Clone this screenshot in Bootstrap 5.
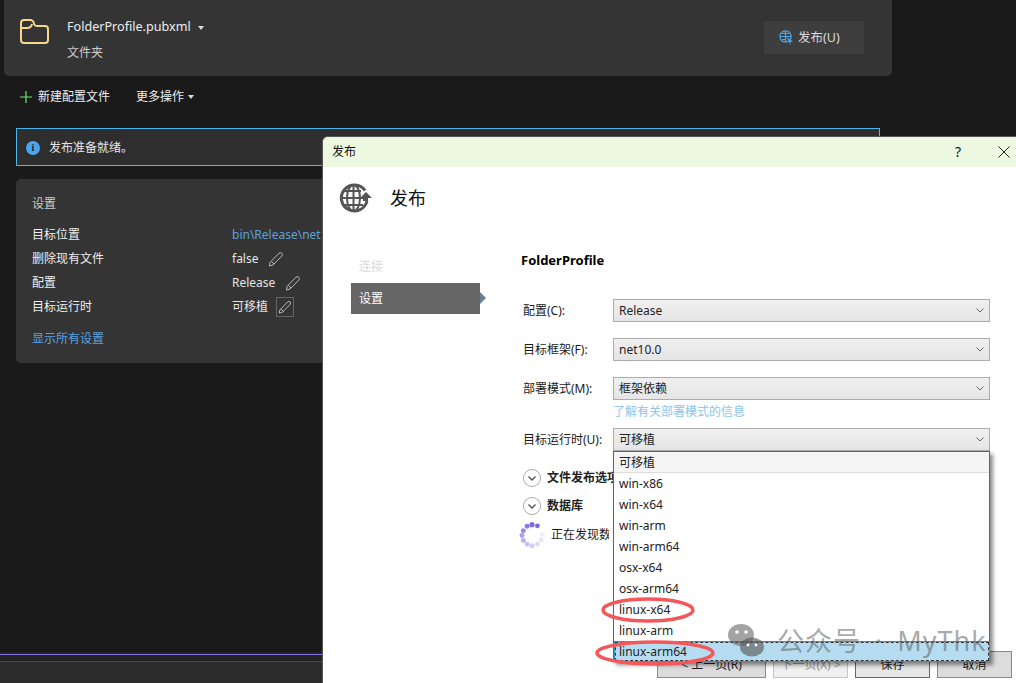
<!DOCTYPE html>
<html lang="zh">
<head>
    <meta charset="UTF-8">
    <title>发布</title>
    <link href="https://cdn.jsdelivr.net/npm/bootstrap@5.3.2/dist/css/bootstrap.min.css" rel="stylesheet">
    <style>
        html, body { height: 683px; overflow: hidden; }
        body {
            position: relative;
            background: #1a1a1a;
            color: #e6e6e6;
            font-family: "Noto Sans", "Noto Sans CJK SC", sans-serif;
            font-size: 12px;
            line-height: 16px;
        }
        .page-wrap { height: 683px; }
        .head-panel { width: 888px; height: 76px; margin-left: 4px; background: #343434; border-radius: 0 0 5px 5px; padding: 18px 28px 0 16px; }
        .profile-name { font-size: 12.6px; line-height: 18px; color: #eee; }
        .profile-sub { margin-top: 9px; color: #ccc; }
        .caret-down { display: inline-block; border: 3.5px solid transparent; border-top: 4px solid #ddd; border-bottom: 0; vertical-align: middle; }
        .publish-btn { width: 100px; height: 33px; margin-top: 3px; padding: 0 0 0 15px; background: #3e3e3e; color: #ddd; border: 0; font-size: 12.5px; }
        .action-row { height: 52px; padding: 0 0 10px 20px; color: #eee; }
        .new-text { margin-left: 6px; }
        .more-text { margin-left: 26px; }
        .info-bar { width: 864px; height: 38px; margin-left: 16px; background: #2e2e2e; border: 1px solid #4ab6ee; padding: 2px 0 0 9px; }
        .info-dot { width: 14px; height: 14px; border-radius: 50%; background: #4aa5f0; color: #222; font: bold 10px/14px "Liberation Serif", serif; text-align: center; margin-right: 9px; }
        .settings-panel { width: 500px; height: 184px; margin: 13px 0 0 16px; background: #343434; border-radius: 5px; padding: 17px 16px 0; }
        .settings-title { color: #ccc; margin-bottom: 11px; }
        .settings-row { height: 24px; display: flex; align-items: center; }
        .settings-key { width: 200px; color: #eee; }
        .settings-link { color: #5ba2dc; white-space: nowrap; }
        .pen-gap { margin-left: 10px; }
        .pen-box { width: 18px; height: 20px; border: 1px solid #666; display: flex; align-items: center; justify-content: center; }
        .more-link { margin-top: 12px; color: #5ba2dc; }
        .purple-line { height: 9px; background: #232323; padding-top: 2px; }
        .purple-line::before { content: ""; display: block; height: 1px; background: #8272ea; }
        .foot-strip { height: 22px; background: #2b2b2b; border-top: 1px solid #444; }

        .pub-dialog { position: absolute; left: 322px; top: 136px; width: 694px; height: 547px; background: #fff; color: #1a1a1a; border-top: 1px solid #555; border-left: 1px solid #555; border-top-left-radius: 6px; overflow: hidden; }
        .dlg-title { height: 30px; background: #edf8e0; padding: 0 6px 0 9px; color: #111; }
        .dlg-tools { gap: 37px; }
        .dlg-help { font-size: 14px; }
        .dlg-head { height: 62px; padding: 16px 0 0 16px; }
        .dlg-h1 { font-size: 18px; line-height: 30px; margin-left: 18px; color: #111; }
        .step-col { width: 158px; padding: 0 0 0 28px; }
        .step-off { height: 30px; margin-top: 23px; padding-left: 8px; line-height: 30px; color: #d8d8d8; }
        .step-on { position: relative; width: 129px; height: 31px; margin-top: 1px; padding-left: 8px; line-height: 31px; background: #666; color: #fff; }
        .step-on::after { content: ""; position: absolute; left: 129px; top: 9px; border: 6px solid transparent; border-left-color: #6a7f95; border-right: 0; }
        .form-col { width: 469px; margin-left: 40px; }
        .profile-h { font-weight: 700; font-size: 13px; line-height: 18px; margin: 22px 0 30px; color: #000; }
        .fld-row { display: flex; align-items: center; margin-bottom: 16px; }
        .fld-row-last { margin-bottom: 13px; }
        .fld-label { width: 90px; margin-left: 2px; }
        .fld-select { width: 377px; height: 23px; padding: 0 5px; display: flex; align-items: center; justify-content: space-between; border: 1px solid #acacac; background: linear-gradient(#f0f0f0, #e5e5e5); color: #222; }
        .fld-hint { color: #8cc4ec; margin: -12px 0 8px 92px; height: 16px; }
        .fold-row { display: flex; align-items: center; width: 90px; height: 28px; font-weight: 700; margin-left: 2px; color: #222; white-space: nowrap; overflow: hidden; }
        .fold-btn { width: 18px; height: 18px; border-radius: 50%; border: 1px solid #aaa; margin-right: 6px; display: flex; align-items: center; justify-content: center; flex-shrink: 0; }
        .spin-row { display: flex; align-items: center; width: 90px; height: 30px; margin-left: -2px; white-space: nowrap; overflow: hidden; }
        .spin-gap { margin-right: 6px; }
        .dd-list { position: absolute; left: 290px; top: 314px; width: 377px; height: 211px; background: #fff; border: 1px solid #646464; box-shadow: 3px 3px 4px rgba(0,0,0,.45); z-index: 3; }
        .dd-item { height: 21px; line-height: 21px; padding-left: 5px; color: #222; }
        .dd-first { background: #f5f5f5; border-bottom: 1px solid #ddd; }
        .dd-sel { background: #b6dcf1; outline: 1px dashed #333; outline-offset: -2px; border: 1px solid #2a96cf; line-height: 19px; padding-left: 4px; margin: 0 -1px 0 0; }
        .dlg-foot { position: absolute; right: 4px; bottom: 5px; gap: 7px; }
        .foot-btn { height: 27px; width: 75px; border: 1px solid #8a8a8a; background: #dcdcdc; color: #222; font-size: 12px; padding: 0; }
        .foot-back { width: 109px; }
        .foot-off { background: #f0f0f0; border-color: #c4c4c4; color: #999; }
        .foot-main { border: 1px solid #1a7fc4; background: #e6e6e6; }
        .red-marks { position: absolute; left: 0; top: 0; z-index: 4; pointer-events: none; }
        .mark-text { position: absolute; left: 777px; top: 623px; z-index: 5; font-size: 27px; line-height: 36px; letter-spacing: 1px; word-spacing: 6px; color: rgba(95,95,95,.55); white-space: nowrap; }
    </style>
</head>
<body>
<div class="page-wrap d-flex flex-column">
    <div class="head-panel d-flex justify-content-between flex-shrink-0">
        <div class="d-flex">
            <svg width="30" height="26" viewBox="0 0 30 26" fill="none" stroke="#f8d68e" stroke-width="2" class="flex-shrink-0">
                <path d="M1 5a3 3 0 0 1 3-3h6a4 4 0 0 1 4 4v0a3 3 0 0 0 3 2h8a3 3 0 0 1 3 3v11a3 3 0 0 1-3 3H4a3 3 0 0 1-3-3z"/>
                <path d="M1 10h6a5 5 0 0 0 5-4"/>
            </svg>
            <div style="margin-left:17px">
                <div class="profile-name">FolderProfile.pubxml <span class="caret-down ms-1"></span></div>
                <div class="profile-sub">文件夹</div>
            </div>
        </div>
        <button class="publish-btn d-flex align-items-center gap-1">
            <svg width="15" height="15" viewBox="0 0 15 15" fill="none" stroke="#4aa5ea" stroke-width="1.2">
                <circle cx="6.5" cy="6.5" r="5.6"/><path d="M1 6.5h11M6.5 1v11M3 3.5h7M3 9.5h4"/>
                <path d="M7.5 7l6.5 4.5-2.5.5v3z" fill="#4aa5ea" stroke="none"/>
            </svg>
            发布(U)
        </button>
    </div>

    <div class="action-row d-flex align-items-center flex-shrink-0">
        <svg width="12" height="12" viewBox="0 0 12 12" stroke="#72e86c" stroke-width="1.2"><path d="M6 0v12M0 6h12"/></svg>
        <span class="new-text">新建配置文件</span>
        <span class="more-text">更多操作</span>
        <span class="caret-down ms-1"></span>
    </div>

    <div class="info-bar d-flex align-items-center flex-shrink-0">
        <div class="info-dot">i</div>
        <span>发布准备就绪。</span>
    </div>

    <div class="settings-panel flex-shrink-0">
        <div class="settings-title">设置</div>
        <div class="settings-row"><div class="settings-key">目标位置</div><div class="settings-link">bin\Release\net10.0\publish\</div></div>
        <div class="settings-row"><div class="settings-key">删除现有文件</div><div>false</div>
            <svg class="pen-gap" width="16" height="16" viewBox="0 0 16 16" fill="none" stroke="#bbb"><path d="M2 11.5L11 2.2a2 2 0 0 1 3 2.6L5 14l-3.5 1z"/><path d="M3.5 10.5l2.500 2.500"/></svg>
        </div>
        <div class="settings-row"><div class="settings-key">配置</div><div>Release</div>
            <svg class="pen-gap" width="16" height="16" viewBox="0 0 16 16" fill="none" stroke="#bbb"><path d="M2 11.5L11 2.2a2 2 0 0 1 3 2.6L5 14l-3.5 1z"/><path d="M3.5 10.5l2.500 2.500"/></svg>
        </div>
        <div class="settings-row"><div class="settings-key">目标运行时</div><div>可移植</div>
            <div class="pen-box ms-2"><svg width="14" height="14" viewBox="0 0 16 16" fill="none" stroke="#ccc"><path d="M2 11.5L11 2.2a2 2 0 0 1 3 2.6L5 14l-3.5 1z"/><path d="M3.5 10.5l2.500 2.500"/></svg></div>
        </div>
        <div class="more-link">显示所有设置</div>
    </div>

    <div class="mt-auto flex-shrink-0">
        <div class="purple-line"></div>
        <div class="foot-strip"></div>
    </div>
</div>

<div class="pub-dialog">
    <div class="dlg-title d-flex align-items-center justify-content-between">
        <span>发布</span>
        <div class="d-flex align-items-center dlg-tools">
            <span class="dlg-help">?</span>
            <svg width="12" height="12" viewBox="0 0 12 12" stroke="#222"><path d="M.5.5l11 11M11.5.5l-11 11"/></svg>
        </div>
    </div>
    <div class="dlg-head d-flex align-items-start">
        <svg width="33" height="30" viewBox="0 0 33 30" fill="none" stroke="#555" class="flex-shrink-0">
            <path d="M26 7.5A13 13 0 1 0 28 18" stroke-width="3"/>
            <path d="M2 15h24M14.500 2v26M4 8h18M4 22h20" stroke-width="2"/>
            <ellipse cx="14.500" cy="15" rx="6.500" ry="13" stroke-width="2"/>
            <path d="M27 9l6 6h-4v3h-5v-3h-3z" fill="#555" stroke="none"/>
        </svg>
        <div class="dlg-h1">发布</div>
    </div>
    <div class="d-flex">
        <div class="step-col">
            <div class="step-off">连接</div>
            <div class="step-on">设置</div>
        </div>
        <div class="form-col">
            <div class="profile-h">FolderProfile</div>
            <div class="fld-row"><div class="fld-label">配置(C):</div>
                <div class="fld-select"><span>Release</span><svg width="8" height="5" viewBox="0 0 8 5" fill="none" stroke="#666"><path d="M.5.5L4 4 7.500.5"/></svg></div></div>
            <div class="fld-row"><div class="fld-label">目标框架(F):</div>
                <div class="fld-select"><span>net10.0</span><svg width="8" height="5" viewBox="0 0 8 5" fill="none" stroke="#666"><path d="M.5.5L4 4 7.500.5"/></svg></div></div>
            <div class="fld-row"><div class="fld-label">部署模式(M):</div>
                <div class="fld-select"><span>框架依赖</span><svg width="8" height="5" viewBox="0 0 8 5" fill="none" stroke="#666"><path d="M.5.5L4 4 7.500.5"/></svg></div></div>
            <div class="fld-hint">了解有关部署模式的信息</div>
            <div class="fld-row fld-row-last"><div class="fld-label">目标运行时(U):</div>
                <div class="fld-select"><span>可移植</span><svg width="8" height="5" viewBox="0 0 8 5" fill="none" stroke="#666"><path d="M.5.5L4 4 7.500.5"/></svg></div></div>
            <div class="fold-row"><div class="fold-btn"><svg width="8" height="5" viewBox="0 0 8 5" fill="none" stroke="#555" stroke-width="1.4"><path d="M.5.5L4 4 7.500.5"/></svg></div>文件发布选项</div>
            <div class="fold-row"><div class="fold-btn"><svg width="8" height="5" viewBox="0 0 8 5" fill="none" stroke="#555" stroke-width="1.4"><path d="M.5.5L4 4 7.500.5"/></svg></div>数据库</div>
            <div class="spin-row">
                <svg width="26" height="26" viewBox="0 0 24 24" class="spin-gap flex-shrink-0">
                    <circle cx="12" cy="2.500" r="2.400" fill="#7c6ae6"/><circle cx="17" cy="3.500" r="2.200" fill="#7c6ae6"/>
                    <circle cx="7.500" cy="4" r="2.300" fill="#8a7aea"/><circle cx="4" cy="8" r="2.300" fill="#9a8cee"/>
                    <circle cx="2.800" cy="12.500" r="2.300" fill="#aaa0f0"/><circle cx="4" cy="17" r="2.300" fill="#b8aef2"/>
                    <circle cx="7.500" cy="20.500" r="2.300" fill="#c6bef5"/><circle cx="12" cy="22" r="2.300" fill="#d2ccf7"/>
                    <circle cx="17" cy="20.500" r="2.200" fill="#dedaf9"/><circle cx="20.500" cy="16.500" r="2.200" fill="#e8e5fa"/>
                    <circle cx="21.500" cy="11.500" r="2.200" fill="#eeecfb"/>
                </svg>
                <span>正在发现数据库</span>
            </div>
        </div>
    </div>

    <div class="dd-list">
        <div class="dd-item dd-first">可移植</div>
        <div class="dd-item">win-x86</div>
        <div class="dd-item">win-x64</div>
        <div class="dd-item">win-arm</div>
        <div class="dd-item">win-arm64</div>
        <div class="dd-item">osx-x64</div>
        <div class="dd-item">osx-arm64</div>
        <div class="dd-item">linux-x64</div>
        <div class="dd-item">linux-arm</div>
        <div class="dd-item dd-sel">linux-arm64</div>
    </div>

    <div class="dlg-foot d-flex">
        <button class="foot-btn foot-back">&lt; 上一页(R)</button>
        <button class="foot-btn foot-off">下一页(X) &gt;</button>
        <button class="foot-btn foot-main">保存</button>
        <button class="foot-btn">取消</button>
    </div>
</div>

<svg class="red-marks" width="1016" height="683" fill="none" stroke="#f4575a" stroke-width="3.500">
    <ellipse cx="648" cy="610" rx="45" ry="11"/>
    <ellipse cx="655" cy="653" rx="58" ry="11"/>
    <g stroke="none">
        <ellipse cx="741" cy="635" rx="13" ry="11" fill="rgba(90,90,90,.55)"/>
        <ellipse cx="752" cy="647" rx="12" ry="9.500" fill="rgba(90,90,90,.65)"/>
        <circle cx="737" cy="632" r="1.800" fill="#fff"/><circle cx="746" cy="632" r="1.800" fill="#fff"/>
        <circle cx="748" cy="645" r="1.400" fill="#fff"/><circle cx="756" cy="645" r="1.400" fill="#fff"/>
    </g>
</svg>
<div class="mark-text">公众号 · MyThk</div>
</body>
</html>
